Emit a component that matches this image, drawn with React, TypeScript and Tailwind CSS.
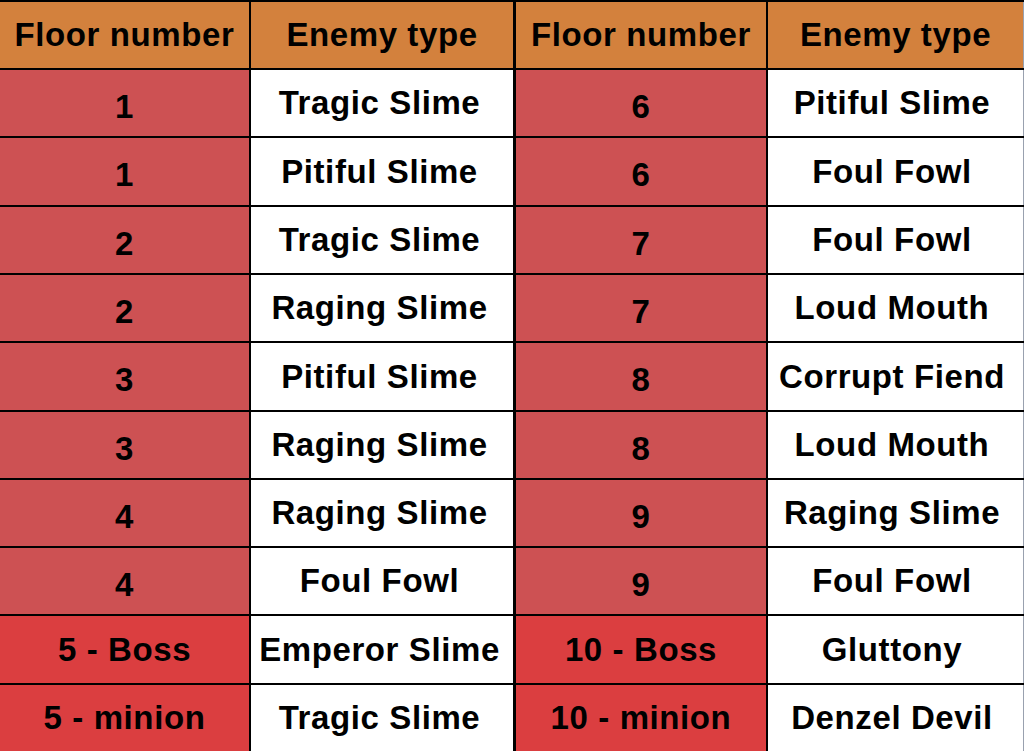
import React from 'react';

type Row = { floor: string; enemy: string; floor2: string; enemy2: string; h: string; boss?: boolean };

const rows: Row[] = [
  { floor: '1', enemy: 'Tragic Slime', floor2: '6', enemy2: 'Pitiful Slime', h: 'h-[68px]' },
  { floor: '1', enemy: 'Pitiful Slime', floor2: '6', enemy2: 'Foul Fowl', h: 'h-[69px]' },
  { floor: '2', enemy: 'Tragic Slime', floor2: '7', enemy2: 'Foul Fowl', h: 'h-[68px]' },
  { floor: '2', enemy: 'Raging Slime', floor2: '7', enemy2: 'Loud Mouth', h: 'h-[68px]' },
  { floor: '3', enemy: 'Pitiful Slime', floor2: '8', enemy2: 'Corrupt Fiend', h: 'h-[69px]' },
  { floor: '3', enemy: 'Raging Slime', floor2: '8', enemy2: 'Loud Mouth', h: 'h-[68px]' },
  { floor: '4', enemy: 'Raging Slime', floor2: '9', enemy2: 'Raging Slime', h: 'h-[68px]' },
  { floor: '4', enemy: 'Foul Fowl', floor2: '9', enemy2: 'Foul Fowl', h: 'h-[68px]' },
  { floor: '5 - Boss', enemy: 'Emperor Slime', floor2: '10 - Boss', enemy2: 'Gluttony', h: 'h-[69px]', boss: true },
  { floor: '5 - minion', enemy: 'Tragic Slime', floor2: '10 - minion', enemy2: 'Denzel Devil', h: 'h-[67px]', boss: true },
];

const cell = 'flex items-center justify-center whitespace-nowrap';

const App = () => {
  return (
    <div
      className="w-[1024px] h-[751px] bg-white text-black font-bold text-[33px] tracking-[0.6px] border-t-2 border-black overflow-hidden"
      style={{ fontFamily: '"Liberation Sans", Arial, sans-serif' }}
    >
      {/* header */}
      <div className="flex h-[68px] border-b-2 border-black bg-[#d3813d]">
        <div className={`${cell} w-[251px] border-r-2 border-black`}>Floor number</div>
        <div className={`${cell} w-[265px] border-r-[3px] border-black`}>Enemy type</div>
        <div className={`${cell} w-[252px] border-r-2 border-black`}>Floor number</div>
        <div className={`${cell} w-[256px] border-r border-gray-400`}>Enemy type</div>
      </div>

      {rows.map((r, i) => {
        const last = i === rows.length - 1;
        const red = r.boss ? 'bg-[#db3e40]' : 'bg-[#cd5153]';
        return (
          <div
            key={i}
            className={`flex ${r.h} ${last ? 'border-b border-gray-400' : 'border-b-2 border-black'}`}
          >
            <div className={`${cell} ${red} w-[251px] border-r-2 border-black ${r.boss ? '' : 'pt-[7px]'}`}>
              {r.floor}
            </div>
            <div className={`${cell} w-[265px] pr-[5px] border-r-[3px] border-black`}>{r.enemy}</div>
            <div className={`${cell} ${red} w-[252px] border-r-2 border-black ${r.boss ? '' : 'pt-[7px]'}`}>
              {r.floor2}
            </div>
            <div className={`${cell} w-[256px] pr-[7px] border-r border-gray-400`}>{r.enemy2}</div>
          </div>
        );
      })}
    </div>
  );
};

export default App;
